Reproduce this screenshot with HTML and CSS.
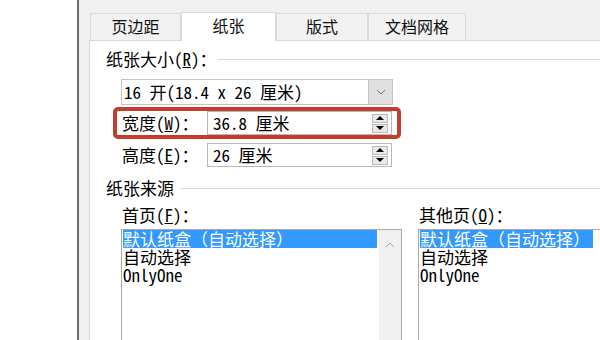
FILE: index.html
```html
<!DOCTYPE html>
<html>
<head>
  <meta charset="utf-8">
  <title>页面设置</title>
  <link rel="stylesheet" href="styles.css">
</head>
<body>

<div class="screen">
  <div class="outside"></div>
  <div class="window">
    <div class="tabs">
      <div class="tab">页边距</div>
      <div class="tab active">纸张</div>
      <div class="tab">版式</div>
      <div class="tab">文档网格</div>
    </div>

    <div class="panel">
      <div class="group-title"><span>纸张大小(<u>R</u>)：</span></div>

      <div class="size-box">
        <div class="combo">
          <span class="combo-text">16 开(18.4 x 26 厘米)</span>
          <span class="drop">
            <svg width="10" height="6" viewBox="0 0 10 6"><polyline points="1,1 5,5 9,1" fill="none" stroke="#7a7a7a" stroke-width="1"/></svg>
          </span>
        </div>

        <div class="field marked">
          <label>宽度(<u>W</u>)：</label>
          <div class="spinbox">
            <span class="value">36.8 厘米</span>
            <span class="spin"><i class="up"></i><i class="down"></i></span>
          </div>
        </div>

        <div class="field">
          <label>高度(<u>E</u>)：</label>
          <div class="spinbox">
            <span class="value">26 厘米</span>
            <span class="spin"><i class="up"></i><i class="down"></i></span>
          </div>
        </div>
      </div>

      <div class="group-title source-title"><span>纸张来源</span></div>

      <div class="sources">
        <div class="source">
          <div class="source-label">首页(<u>F</u>)：</div>
          <div class="list">
            <div class="items">
              <div class="item sel">默认纸盒（自动选择）</div>
              <div class="item">自动选择</div>
              <div class="item">OnlyOne</div>
            </div>
            <div class="scrollbar">
              <svg width="10" height="6" viewBox="0 0 10 6"><polyline points="1,5 5,1 9,5" fill="none" stroke="#a8a8a8" stroke-width="1"/></svg>
            </div>
          </div>
        </div>

        <div class="source other">
          <div class="source-label">其他页(<u>O</u>)：</div>
          <div class="list">
            <div class="items">
              <div class="item sel">默认纸盒（自动选择）</div>
              <div class="item">自动选择</div>
              <div class="item">OnlyOne</div>
            </div>
          </div>
        </div>
      </div>
    </div>
  </div>
</div>

</body>
</html>
```

FILE: styles.css
```css
body {
  margin: 0;
  background: #fff;
  font-family: "Noto Sans Mono CJK SC", "Liberation Mono", "Noto Sans CJK SC", monospace;
  font-size: 17px;
  color: #000;
}

.screen {
  display: flex;
  width: 600px;
  height: 340px;
  overflow: hidden;
}

.outside {
  width: 77px;
  flex: none;
  background: #fff;
}

.window {
  flex: 1;
  display: flex;
  flex-direction: column;
  min-width: 0;
  border-left: 2px solid #6e6e6e;
  background: #f0f0f0;
  padding: 12px 0 0 10px;
}

/* tabs */
.tabs {
  display: grid;
  grid-template-columns: 91px 95px 92px 98px;
  align-items: end;
  height: 28px;
  margin-left: 1px;
  font-family: "Noto Sans CJK SC", sans-serif;
  font-size: 16px;
}

.tab {
  height: 26px;
  line-height: 24px;
  text-align: center;
  border: 1px solid #dadada;
  border-bottom: none;
  background: #f2f2f2;
  color: #111;
}

.active {
  height: 28px;
  line-height: 25px;
  background: #fff;
  position: relative;
  z-index: 1;
  margin-bottom: -1px;
}

.panel {
  flex: 1;
  background: #fff;
  border-top: 1px solid #dadada;
  border-left: 1px solid #dadada;
  padding: 7px 0 0 16px;
}

/* group titles with a rule */
.group-title {
  display: flex;
  align-items: center;
  line-height: 22px;
}

.group-title::after {
  content: "";
  flex: 1;
  height: 1px;
  margin: 1px 0 0 1px;
  background: #dcdcdc;
}

.source-title::after {
  margin-left: 6px;
}

.size-box {
  width: 272px;
  margin: 9px 0 0 15px;
}

.combo {
  display: flex;
  height: 26px;
  border: 1px solid #c4c4c4;
  box-sizing: border-box;
}

.combo-text {
  flex: 1;
  padding-left: 2px;
  line-height: 24px;
  white-space: nowrap;
}

.drop {
  width: 23px;
  background: #e0e0e0;
  border-left: 1px solid #c4c4c4;
  display: flex;
  align-items: center;
  justify-content: center;
}

.field {
  display: flex;
  align-items: center;
  padding: 0 1px;
  margin-top: 4px;
}

.field label {
  width: 85px;
  flex: none;
  line-height: 24px;
}

.marked {
  margin: 2px -8px 0;
  border: 4px solid #c43c2e;
  border-radius: 5px;
  padding: 0 5px;
}

.spinbox {
  flex: 1;
  display: flex;
  align-items: center;
  height: 24px;
  box-sizing: border-box;
  border: 1px solid #b8b8b8;
  padding: 0 3px 0 5px;
}

.value {
  flex: 1;
  line-height: 22px;
  white-space: nowrap;
}

.spin {
  display: flex;
  flex-direction: column;
  gap: 1px;
}

.spin i {
  width: 16px;
  height: 9px;
  box-sizing: border-box;
  background: #e8e8e8;
  border: 1px solid #bcbcbc;
  display: flex;
  align-items: center;
  justify-content: center;
}

.spin i::before {
  content: "";
  border-left: 4px solid transparent;
  border-right: 4px solid transparent;
}

.spin .up::before {
  border-bottom: 4px solid #000;
}

.spin .down::before {
  border-top: 4px solid #000;
}

.source-title {
  margin-top: 10px;
}

/* paper source lists */
.sources {
  display: flex;
  gap: 16px;
  margin: 5px 0 0 15px;
}

.source {
  width: 281px;
  flex: none;
}

.source-label {
  padding-left: 1px;
  line-height: 22px;
}

.list {
  display: flex;
  height: 140px;
  margin-top: 3px;
  border: 1px solid #a9a9a9;
  box-sizing: border-box;
}

.items {
  flex: 1;
  padding: 0 2px 0 1px;
}

.item {
  line-height: 18px;
  height: 18px;
  white-space: nowrap;
}

.sel {
  background: #3399ff;
  color: #fff;
}

.other .sel {
  width: fit-content;
  padding-right: 3px;
}

.scrollbar {
  width: 22px;
  background: #f0f0f0;
  display: flex;
  justify-content: center;
  padding-top: 12px;
}
```
